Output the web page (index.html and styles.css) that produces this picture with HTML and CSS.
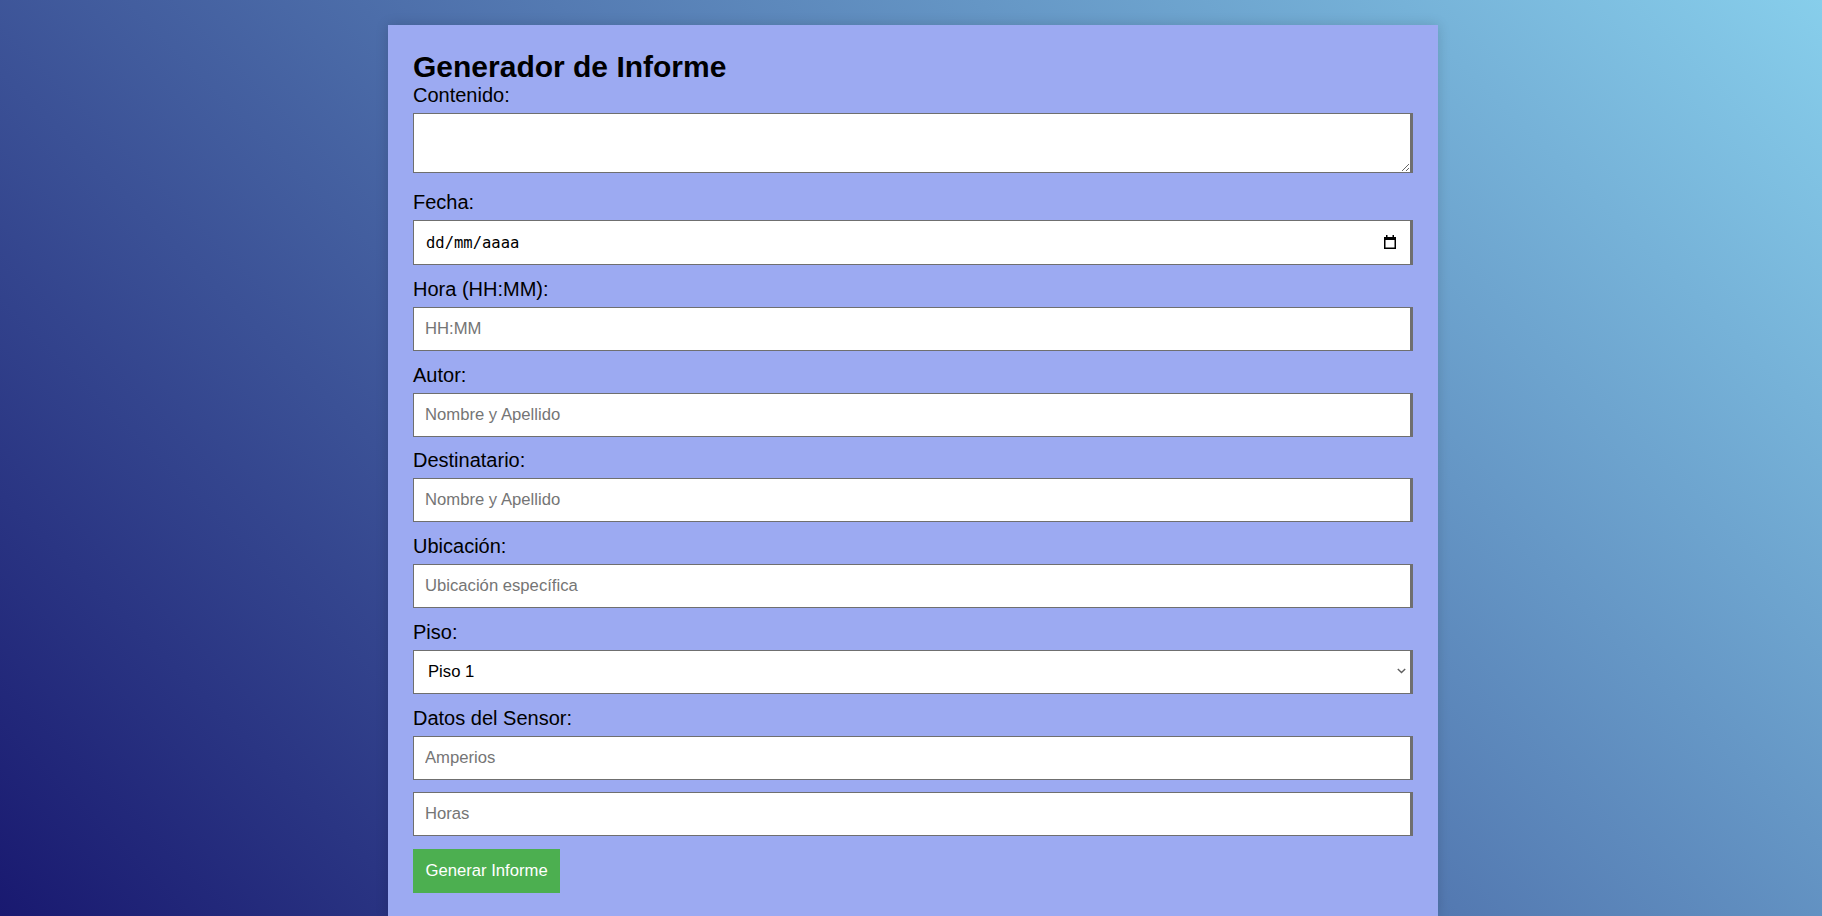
FILE: index.html
```html
<!DOCTYPE html>
<html lang="es">
<head>
<meta charset="utf-8">
<title>Generador de Informe</title>
<link rel="stylesheet" href="styles.css">
</head>
<body>
<div class="card">
  <h2 class="title">Generador de Informe</h2>
  <form class="report-form">
    <label class="label" for="contenido">Contenido:</label>
    <textarea id="contenido" class="field textarea"></textarea>

    <label class="label" for="fecha">Fecha:</label>
    <div class="overlay-wrap">
      <input id="fecha" class="field date-field" type="text" value="dd/mm/aaaa" readonly>
      <svg class="cal-icon" width="14" height="16" viewBox="0 0 14 16" aria-hidden="true">
        <rect x="1.75" y="3.75" width="10.5" height="10.5" fill="none" stroke="#000" stroke-width="1.5"/>
        <rect x="1" y="3" width="12" height="3" fill="#000"/>
        <rect x="3" y="1" width="1.5" height="3" fill="#000"/>
        <rect x="9.5" y="1" width="1.5" height="3" fill="#000"/>
      </svg>
    </div>

    <label class="label" for="hora">Hora (HH:MM):</label>
    <input id="hora" class="field" type="text" placeholder="HH:MM">

    <label class="label" for="autor">Autor:</label>
    <input id="autor" class="field" type="text" placeholder="Nombre y Apellido">

    <label class="label" for="destinatario">Destinatario:</label>
    <input id="destinatario" class="field" type="text" placeholder="Nombre y Apellido">

    <label class="label" for="ubicacion">Ubicación:</label>
    <input id="ubicacion" class="field" type="text" placeholder="Ubicación específica">

    <label class="label" for="piso">Piso:</label>
    <div class="overlay-wrap">
      <select id="piso" class="field select">
        <option>Piso 1</option>
        <option>Piso 2</option>
        <option>Piso 3</option>
      </select>
      <svg class="chevron" width="9" height="6" viewBox="0 0 9 6" aria-hidden="true">
        <path d="M0.8 1 L4.5 4.6 L8.2 1" fill="none" stroke="#5f5f5f" stroke-width="1.4"/>
      </svg>
    </div>

    <label class="label" for="amperios">Datos del Sensor:</label>
    <input id="amperios" class="field" type="text" placeholder="Amperios">
    <input id="horas" class="field" type="text" placeholder="Horas">

    <button type="button" class="btn">Generar Informe</button>
  </form>
</div>
</body>
</html>
```

FILE: styles.css
```css
html {
  height: 100%;
  overflow: hidden;
}

body {
  margin: 0;
  min-height: 100%;
  background: linear-gradient(45deg, #191970, #87ceeb);
  font-family: "Liberation Sans", Arial, sans-serif;
  color: #000;
}

.card {
  width: 1000px;
  margin: 25px 0 0 calc(50% - 523px);
  padding: 25px;
  background: #9caaf2;
  box-shadow: 0 0 12px rgba(0, 0, 0, 0.15);
}

.title {
  margin: 0 0 1px;
  font-size: 30px;
  line-height: 33px;
  font-weight: bold;
}

.report-form {
  display: flex;
  flex-direction: column;
  align-items: flex-start;
}

.label {
  display: block;
  font-size: 20px;
  line-height: 23px;
  margin: 0 0 6px;
}

.field {
  display: block;
  width: 100%;
  box-sizing: border-box;
  height: 44px;
  margin: 0 0 12.75px;
  padding: 0 11px;
  font-family: "Liberation Sans", Arial, sans-serif;
  font-size: 16.67px;
  color: #000;
  background: #fff;
  border: 1px solid #6f6f6f;
  border-right-width: 3px;
  border-radius: 0;
  outline: none;
}

.field::placeholder {
  color: #757575;
}

.textarea {
  height: 60px;
  padding: 10px;
  margin-bottom: 18px;
  resize: both;
}

.overlay-wrap {
  position: relative;
  width: 100%;
}

.date-field {
  height: 45px;
  padding-left: 12px;
  font-family: "DejaVu Sans Mono", "Liberation Mono", monospace;
  font-size: 15.5px;
  cursor: default;
}

.cal-icon {
  position: absolute;
  right: 16px;
  top: 14px;
}

.select {
  -webkit-appearance: none;
  appearance: none;
  padding: 0 14px;
}

.chevron {
  position: absolute;
  right: 7px;
  top: 18px;
  pointer-events: none;
}

.btn {
  height: 44px;
  padding: 0 12.5px;
  background: #4caf50;
  color: #fff;
  border: none;
  font-family: "Liberation Sans", Arial, sans-serif;
  font-size: 16.67px;
  cursor: pointer;
}
```
